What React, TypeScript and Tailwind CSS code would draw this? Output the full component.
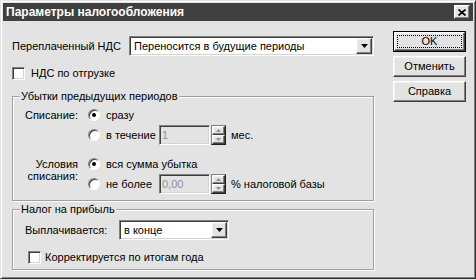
import React from "react";

const sunken =
  "border border-t-[#808080] border-l-[#808080] border-r-white border-b-white shadow-[inset_1px_1px_0_#404040,inset_-1px_-1px_0_#d4d4d4]";
const raised =
  "border border-t-white border-l-white border-r-[#404040] border-b-[#404040] shadow-[inset_-1px_-1px_0_#808080,inset_1px_1px_0_#f0f0f0]";

const Radio = ({ checked }: { checked?: boolean }) => (
  <div className="w-[12px] h-[12px] rounded-full bg-white border border-t-[#808080] border-l-[#808080] border-r-white border-b-white shadow-[inset_1px_1px_0_#404040] flex items-center justify-center shrink-0">
    {checked && <div className="w-[4px] h-[4px] rounded-full bg-black" />}
  </div>
);

const Checkbox = () => <div className={`w-[13px] h-[13px] bg-white shrink-0 ${sunken}`} />;

const DownArrow = ({ color = "#000" }: { color?: string }) => (
  <svg width="7" height="4" viewBox="0 0 7 4">
    <path d="M0 0H7L3.5 4Z" fill={color} />
  </svg>
);

const Select = ({ value, width }: { value: string; width: string }) => (
  <div className={`${width} h-[20px] p-[1px] bg-white flex items-stretch ${sunken}`}>
    <div className="flex-1 pl-[3px] flex items-center whitespace-nowrap overflow-hidden">{value}</div>
    <div className={`w-[16px] bg-[#e3e3e3] flex items-center justify-center ${raised}`}>
      <DownArrow />
    </div>
  </div>
);

const Spin = () => (
  <div className="w-[15px] h-[20px] border border-t-[#808080] border-l-[#808080] border-r-[#202020] border-b-[#202020] flex flex-col">
    <div className={`flex-1 bg-[#e3e3e3] flex items-center justify-center ${raised}`}>
      <svg width="5" height="3" viewBox="0 0 5 3">
        <path d="M2.5 0L5 3H0Z" fill="#909090" />
      </svg>
    </div>
    <div className={`flex-1 bg-[#e3e3e3] flex items-center justify-center ${raised}`}>
      <svg width="5" height="3" viewBox="0 0 5 3">
        <path d="M0 0H5L2.5 3Z" fill="#909090" />
      </svg>
    </div>
  </div>
);

const NumField = ({ value, unit }: { value: string; unit: string }) => (
  <div className="flex items-center">
    <div className={`w-[51px] h-[20px] pl-[2px] flex items-center text-[#909090] bg-[#e3e3e3] ${sunken}`}>{value}</div>
    <div className="ml-[1px]">
      <Spin />
    </div>
    <span className="ml-[5px] whitespace-nowrap">{unit}</span>
  </div>
);

const RadioRow = ({ checked, label, children }: { checked?: boolean; label: string; children?: React.ReactNode }) => (
  <div className="h-[20px] flex items-center">
    <Radio checked={checked} />
    <span className={`ml-[6px] whitespace-nowrap ${children ? "w-[53px]" : ""}`}>{label}</span>
    {children}
  </div>
);

const Button = ({ label, def }: { label: string; def?: boolean }) =>
  def ? (
    <div className="w-[73px] h-[21px] border border-black">
      <div className={`h-full bg-[#e3e3e3] p-[2px] ${raised}`}>
        <div className="h-full border border-dotted border-black flex items-center justify-center">{label}</div>
      </div>
    </div>
  ) : (
    <div className={`w-[73px] h-[21px] bg-[#e3e3e3] flex items-center justify-center ${raised}`}>{label}</div>
  );

const fieldset = "border border-[#a0a0a0] shadow-[inset_1px_1px_0_white,1px_1px_0_white]";
const legend = "ml-[7px] px-[1px] leading-[13px] bg-[#e3e3e3]";

export default function App() {
  return (
    <div className="w-[476px] h-[280px] bg-[#e3e3e3] font-['Liberation_Sans',Arial,sans-serif] text-[11px] text-black">
      <div className="w-[476px] h-[279px] p-[2px] border border-t-[#e3e3e3] border-l-[#e3e3e3] border-r-[#303030] border-b-[#303030] shadow-[inset_1px_1px_0_white,inset_-1px_-1px_0_#808080] flex flex-col">
        <div className="h-[18px] bg-[#404040] flex items-center pl-[3px] pr-[3px]">
          <span className="flex-1 text-white font-bold text-[12px]">Параметры налогообложения</span>
          <div className={`w-[16px] h-[14px] bg-[#e3e3e3] flex items-center justify-center ${raised}`}>
            <svg width="8" height="7" viewBox="0 0 8 7">
              <path d="M0.5 0.5L7.5 6.5M7.5 0.5L0.5 6.5" stroke="#000" strokeWidth="1.7" />
            </svg>
          </div>
        </div>
        <div className="flex pl-[9px]">
          <div className="w-[362px] flex flex-col">
            <div className="mt-[15px] h-[20px] flex items-center">
              <span className="w-[117px]">Переплаченный НДС</span>
              <Select value="Переносится в будущие периоды" width="w-[245px]" />
            </div>
            <div className="mt-[11px] h-[13px] flex items-center">
              <Checkbox />
              <span className="ml-[6px]">НДС по отгрузке</span>
            </div>
            <fieldset className={`mt-[10px] pb-[6px] ${fieldset}`}>
              <legend className={legend}>Убытки предыдущих периодов</legend>
              <div className="pt-[2px] flex">
                <div className="w-[65px] text-right leading-[20px]">Списание:</div>
                <div className="ml-[10px] flex flex-col">
                  <RadioRow checked label="сразу" />
                  <RadioRow label="в течение">
                    <NumField value="1" unit="мес." />
                  </RadioRow>
                </div>
              </div>
              <div className="mt-[9px] flex">
                <div className="w-[65px] text-right leading-[12px] pt-[4px]">
                  Условия
                  <br />
                  списания:
                </div>
                <div className="ml-[10px] flex flex-col">
                  <RadioRow checked label="вся сумма убытка" />
                  <RadioRow label="не более">
                    <NumField value="0,00" unit="% налоговой базы" />
                  </RadioRow>
                </div>
              </div>
            </fieldset>
            <fieldset className={`mt-[2px] pb-[5px] ${fieldset}`}>
              <legend className={legend}>Налог на прибыль</legend>
              <div className="pt-[4px] pl-[12px] flex items-center">
                <span className="w-[94px]">Выплачивается:</span>
                <Select value="в конце" width="w-[110px]" />
              </div>
              <div className="mt-[11px] pl-[15px] h-[13px] flex items-center">
                <Checkbox />
                <span className="ml-[4px]">Корректируется по итогам года</span>
              </div>
            </fieldset>
          </div>
          <div className="ml-[19px] mt-[10px] flex flex-col gap-[4px]">
            <Button def label="OK" />
            <Button label="Отменить" />
            <Button label="Справка" />
          </div>
        </div>
      </div>
    </div>
  );
}
